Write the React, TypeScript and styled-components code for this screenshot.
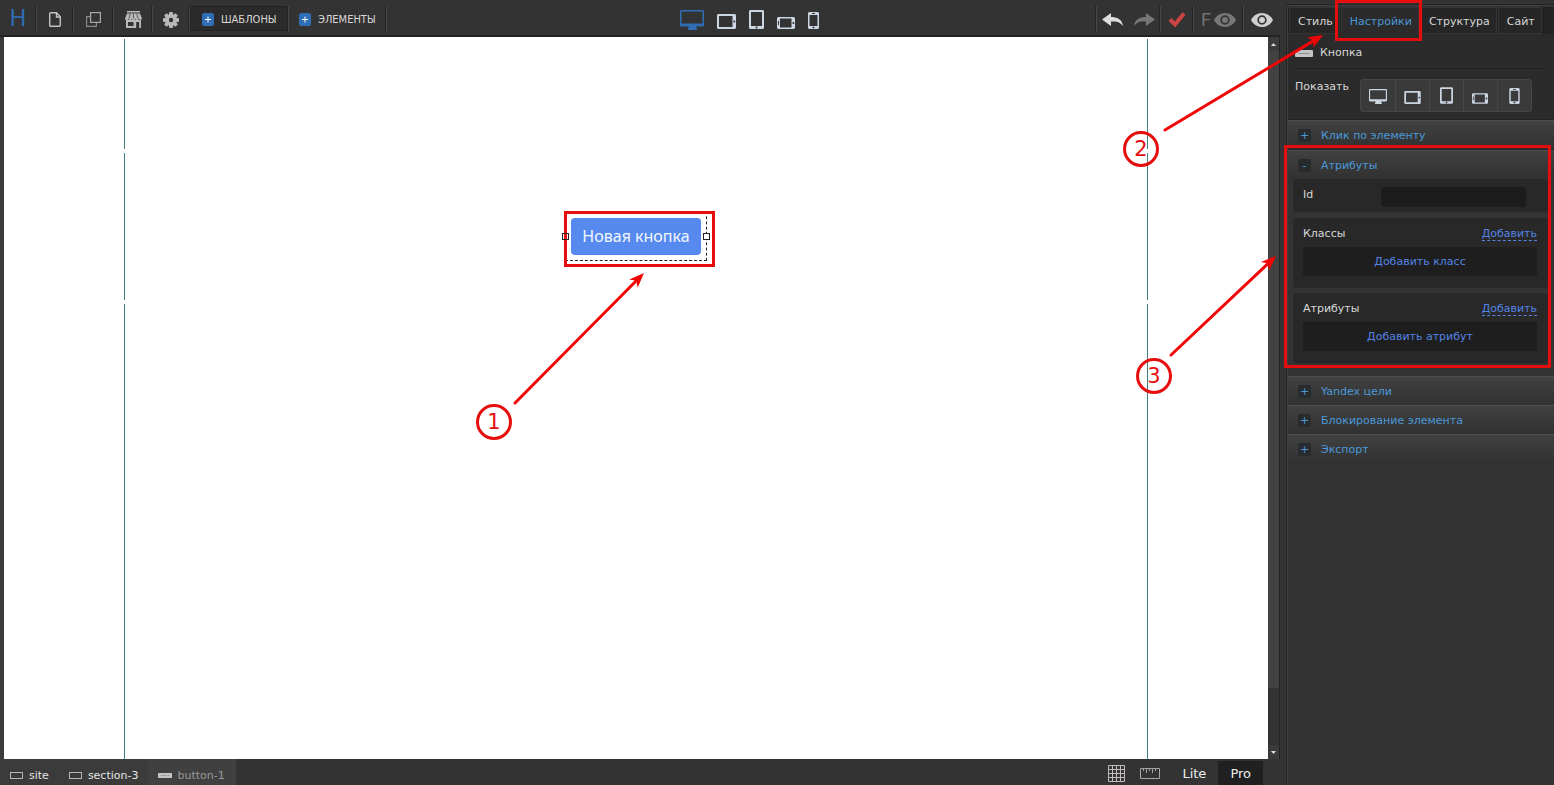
import React from "react";
import styled, { createGlobalStyle, css } from "styled-components";

const c = {
  chrome: "#333333",
  dark: "#232323",
  panel: "#2b2b2b",
  light: "#484848",
  text: "#d8d8d8",
  icon: "#c4c4c4",
  device: "#ccd6e2",
  blue: "#2f6db5",
  link: "#4a98d8",
  action: "#5384e4",
  red: "#e60d0d",
  arrow: "#f00606",
  field: "#1c1c1c",
};

const GlobalStyle = createGlobalStyle`
  * { box-sizing: border-box; }
  body { margin: 0; background: ${c.chrome}; color: ${c.text}; font: 11px/16px "DejaVu Sans", sans-serif; }
  button, input { font: inherit; color: inherit; }
  button { border: 0; padding: 0; background: none; cursor: pointer; }
  svg { display: block; flex: none; }
`;

const Page = styled.div`
  position: relative;
  display: flex;
  min-height: 100vh;
  overflow: hidden;
`;

const Workspace = styled.main`
  flex: 1;
  min-width: 0;
  display: flex;
  flex-direction: column;
  margin-right: 6px;
`;

/* Top toolbar */
const Toolbar = styled.header`
  display: flex;
  height: 37px;
  padding: 6px 0 4px;
  border-bottom: 2px solid ${c.dark};
`;

const ToolButton = styled.button<{ $w: number }>`
  display: flex;
  align-items: center;
  justify-content: center;
  width: ${(p) => p.$w}px;
  padding-top: 2px;
  border-right: 1px solid ${c.light};
  box-shadow: inset -1px 0 ${c.dark};
`;

const Logo = styled.a`
  display: flex;
  align-items: center;
  justify-content: center;
  width: 37px;
  border-right: 1px solid ${c.light};
  box-shadow: inset -1px 0 ${c.dark};
  color: ${c.blue};
  font: 23px/24px Roboto, sans-serif;
  text-decoration: none;
`;

const AddButton = styled.button<{ $active?: boolean }>`
  display: flex;
  align-items: center;
  gap: 7px;
  width: ${(p) => (p.$active ? 99 : 98)}px;
  padding: 2px 0 0 ${(p) => (p.$active ? 12 : 10)}px;
  border-right: 1px solid ${c.light};
  box-shadow: inset -1px 0 ${c.dark};
  font: 11px/16px "DejaVu Sans Condensed", "DejaVu Sans", sans-serif;
  ${(p) =>
    p.$active &&
    css`
      background: #2b2b2b;
      box-shadow: inset 0 0 0 1px ${c.dark};
    `}
`;

const Devices = styled.div`
  flex: 1;
  display: flex;
  align-items: flex-end;
  justify-content: center;
  gap: 13px;
  padding: 0 0 1px 16px;
`;

const DeviceButton = styled.button<{ $active?: boolean }>`
  padding-bottom: ${(p) => (p.$active ? 0 : 1)}px;
`;

const History = styled.div`
  display: flex;
  border-left: 1px solid ${c.light};
  box-shadow: -1px 0 ${c.dark};
`;

const HistoryButton = styled(ToolButton)<{ $plain?: boolean }>`
  gap: 3px;
  color: #737373;
  font: 18px/20px Roboto, sans-serif;
  ${(p) =>
    p.$plain &&
    css`
      border-right: 0;
      box-shadow: none;
    `}
`;

/* Canvas */
const CanvasRow = styled.div`
  flex: 1;
  display: flex;
  padding-left: 4px;
  border-right: 1px solid ${c.dark};
  background: #3d3b39;
`;

const Canvas = styled.div`
  position: relative;
  flex: 1;
  display: flex;
  flex-direction: column;
  align-items: center;
  gap: 4px;
  padding-top: 2px;
  background: #ffffff;
  overflow: hidden;
`;

const Section = styled.section<{ $h?: number }>`
  display: flex;
  justify-content: center;
  align-items: center;
  width: 1024px;
  max-width: 100%;
  border: solid #417f80;
  border-width: 0 1px;
  ${(p) => (p.$h ? `height: ${p.$h}px;` : "flex: 1;")}
`;

const Selection = styled.div`
  position: relative;
  margin-top: 19px;
  padding: 6px 5px 5px;
  border: 1px dashed #222222;
  border-top-color: transparent;
`;

const CanvasButton = styled.button`
  display: block;
  height: 37px;
  padding: 0 11px;
  border-radius: 4px;
  background: #578aee;
  color: #f3f7ff;
  font: 16px/37px "Noto Sans", sans-serif;
`;

const Handle = styled.span<{ $side: "left" | "right" }>`
  position: absolute;
  z-index: 3;
  top: 21px;
  ${(p) => p.$side}: -4px;
  width: 7px;
  height: 7px;
  border: 1px solid #222222;
  background: ${(p) => (p.$side === "right" ? "#ffffff" : "transparent")};
`;

const Scrollbar = styled.div`
  display: flex;
  flex-direction: column;
  width: 11px;
  background: ${c.chrome};
`;

const ScrollButton = styled.button`
  display: flex;
  align-items: center;
  justify-content: center;
  height: 14px;
  background: #3b3b3b;
`;

const Thumb = styled.div`
  flex: 637;
  background: #424242;
`;

const Track = styled.div`
  flex: 57;
`;

/* Bottom bar */
const StatusBar = styled.footer`
  display: flex;
  justify-content: space-between;
  height: 26px;
`;

const Crumbs = styled.nav`
  display: flex;
  padding-left: 10px;
  background: #3b3b3b;
`;

const Crumb = styled.button<{ $current?: boolean }>`
  display: flex;
  align-items: center;
  gap: 6px;
  padding: 7px 20px 0 0;
  color: #e4e4e4;
  ${(p) =>
    p.$current &&
    css`
      margin-left: -10px;
      padding: 7px 11px 0 10px;
      gap: 5px;
      background: #404040;
      color: #989898;
    `}
`;

const ViewTools = styled.div`
  display: flex;
  align-items: center;
  padding-right: 17px;
`;

const ViewButton = styled.button<{ $gap: number }>`
  padding-top: 2px;
  margin-right: ${(p) => p.$gap}px;
`;

const Mode = styled.button<{ $active?: boolean }>`
  align-self: stretch;
  margin-top: 2px;
  padding: 1px 12px 0;
  color: #eeeeee;
  font-size: 13px;
  line-height: 24px;
  background: ${(p) => (p.$active ? "#202020" : "transparent")};
`;

/* Side panel */
const Panel = styled.aside`
  position: relative;
  width: 268px;
  margin-top: 4px;
  border: solid ${c.dark};
  border-width: 1px 0 0 1px;
  box-shadow: inset 1px 1px #3e3e3e;
  padding: 2px 0 0 1px;
`;

const Tabs = styled.div`
  display: flex;
  gap: 1px;
  height: 27px;
  padding-left: 1px;
  background: ${c.dark};
`;

const Tab = styled.button<{ $active?: boolean }>`
  position: relative;
  padding: 3px 6px 0 8px;
  border: 1px solid #353535;
  border-bottom-color: ${(p) => (p.$active ? c.panel : "#353535")};
  background: ${(p) => (p.$active ? c.panel : "#262626")};
  color: ${(p) => (p.$active ? c.link : c.text)};
`;

const Summary = styled.div`
  padding: 0 7px 7px;
  background: ${c.panel};
  border-bottom: 1px solid ${c.dark};
`;

const ElementName = styled.h2`
  display: flex;
  align-items: center;
  gap: 7px;
  height: 35px;
  margin: 0;
  padding-top: 4px;
  border-bottom: 1px solid #222222;
  font-size: 11px;
  font-weight: normal;
`;

const ShowRow = styled.div`
  display: flex;
  gap: 11px;
  padding-top: 10px;
`;

const DeviceGroup = styled.div`
  display: flex;
  height: 33px;
  border: 1px solid #464646;
  border-radius: 3px;
  background: #3a3a3a;
`;

const DeviceToggle = styled.button`
  display: flex;
  align-items: flex-end;
  justify-content: center;
  width: 34px;
  padding-bottom: 7px;
  & + & {
    border-left: 1px solid #464646;
  }
`;

const Group = styled.section<{ $open?: boolean }>`
  position: relative;
  ${(p) =>
    p.$open &&
    css`
      border-top: 1px solid ${c.dark};
      padding-bottom: 8px;
    `}
`;

const GroupHeader = styled.button`
  display: flex;
  align-items: center;
  gap: 10px;
  width: 100%;
  height: 29px;
  padding: 1px 0 0 10px;
  border-top: 1px solid #4e4e4e;
  background: linear-gradient(#414141, #313131);
  color: ${c.link};
`;

const Sign = styled.span`
  width: 13px;
  height: 13px;
  border-radius: 2px;
  background: #282b2e;
  line-height: 13px;
  text-align: center;
`;

const Card = styled.div`
  margin: 0 6px 5px 5px;
  padding: 8px 11px 12px 10px;
  border-radius: 4px;
  background: #282828;
`;

const FieldCard = styled(Card)`
  display: flex;
  justify-content: space-between;
  padding: 8px 22px 5px 10px;
  margin-bottom: 6px;
`;

const IdInput = styled.input`
  width: 145px;
  height: 20px;
  border: 0;
  border-radius: 3px;
  background: ${c.field};
`;

const CardHead = styled.div`
  display: flex;
  justify-content: space-between;
  height: 21px;
`;

const AddLink = styled.a`
  height: 15px;
  border-bottom: 1px dashed ${c.action};
  color: ${c.action};
  text-decoration: none;
`;

const AddRow = styled.button`
  width: 100%;
  height: 29px;
  padding-top: 1px;
  border-radius: 3px;
  background: #1e1e1e;
  color: ${c.action};
`;

/* Step markers drawn over the editor */
const Outline = styled.span<{ $inset: string }>`
  position: absolute;
  z-index: 2;
  inset: ${(p) => p.$inset};
  border: 3px solid ${c.red};
  pointer-events: none;
`;

const Step = styled.span<{ $x: string; $y: number }>`
  position: absolute;
  z-index: 4;
  ${(p) => p.$x};
  top: ${(p) => p.$y}px;
  width: 36px;
  height: 36px;
  border: 3px solid ${c.red};
  border-radius: 50%;
  color: ${c.red};
  font-size: 21px;
  line-height: 30px;
  text-align: center;
`;

const ArrowSvg = styled.svg<{ $x: string; $y: number }>`
  position: absolute;
  z-index: 4;
  ${(p) => p.$x};
  top: ${(p) => p.$y}px;
  pointer-events: none;
`;

function Arrow({ x, y, w, h }: { x: string; y: number; w: number; h: number }) {
  const angle = (Math.atan2(-(h - 4), w - 4) * 180) / Math.PI;
  return (
    <ArrowSvg $x={x} $y={y} width={w} height={h} overflow="visible" aria-hidden="true">
      <path d={`M2 ${h - 2}L${w - 8} ${8 * (h / w)}`} stroke={c.arrow} strokeWidth="3" strokeLinecap="round" />
      <path d="M0 0L-15 -6L-11 0L-15 6Z" fill={c.arrow} transform={`translate(${w} 0) rotate(${angle})`} />
    </ArrowSvg>
  );
}

type DeviceKind = "desktop" | "tabletWide" | "tablet" | "phoneWide" | "phone";
const deviceLabels: Record<DeviceKind, string> = {
  desktop: "Компьютер",
  tabletWide: "Планшет горизонтально",
  tablet: "Планшет",
  phoneWide: "Телефон горизонтально",
  phone: "Телефон",
};
const kinds = Object.keys(deviceLabels) as DeviceKind[];

function DeviceIcon({ kind, small, color = c.device }: { kind: DeviceKind; small?: boolean; color?: string }) {
  const hole = small ? "#3a3a3a" : c.chrome;
  if (kind === "desktop")
    return (
      <svg width={small ? 18 : 24} height={small ? 15 : 20} viewBox="0 0 24 20">
        <path
          fill={color}
          fillRule="evenodd"
          d="M1.500 0h21a1.500 1.500 0 0 1 1.500 1.500v13.500a1.500 1.500 0 0 1-1.500 1.500h-6.500l1 2.500v1h-9v-1l1-2.500h-7.500a1.500 1.500 0 0 1-1.500-1.500v-13.500a1.500 1.500 0 0 1 1.500-1.500zM1.500 1.500v12h21v-12z"
        />
      </svg>
    );
  if (kind === "tabletWide")
    return (
      <svg width={small ? 17 : 19} height={small ? 13 : 15} viewBox="0 0 19 15">
        <path fill={color} fillRule="evenodd" d="M1 0h17l1 1v13l-1 1H1l-1-1V1zM2 2v11h13.500V2z" />
        <circle cx="17.300" cy="7.500" r="1" fill={hole} />
      </svg>
    );
  if (kind === "tablet")
    return (
      <svg width={small ? 13 : 15} height={small ? 17 : 19} viewBox="0 0 15 19">
        <path fill={color} fillRule="evenodd" d="M1 0h13l1 1v17l-1 1H1l-1-1V1zM2 2v14h11V2z" />
        <circle cx="7.500" cy="17.500" r="1" fill={hole} />
      </svg>
    );
  if (kind === "phoneWide")
    return (
      <svg width={small ? 16 : 18} height={small ? 11 : 12} viewBox="0 0 18 12">
        <path fill={color} fillRule="evenodd" d="M1 0h16l1 1v10l-1 1H1l-1-1V1zM3 1.500v9h11.500v-9z" />
        <path d="M1.500 4v4" stroke={hole} />
        <circle cx="16.300" cy="6" r="1" fill={hole} />
      </svg>
    );
  return (
    <svg width={11} height={small ? 16 : 17} viewBox="0 0 11 17">
      <path fill={color} fillRule="evenodd" d="M1 0h9l1 1v15l-1 1H1l-1-1V1zM1.500 3v11h8V3z" />
      <path d="M4 1.500h3" stroke={hole} />
      <circle cx="5.500" cy="15.500" r="1" fill={hole} />
    </svg>
  );
}

const PlusIcon = () => (
  <svg width="12" height="13" viewBox="0 0 12 13">
    <rect width="12" height="13" rx="2.500" fill="#2f6fb8" />
    <path d="M6 3.500v6M3 6.500h6" stroke="#fff" />
  </svg>
);

const EyeIcon = ({ color }: { color: string }) => (
  <svg width="22" height="14" viewBox="0 0 22 14">
    <path
      fill={color}
      fillRule="evenodd"
      d="M11 0C16 0 20 3 22 7 20 11 16 14 11 14S2 11 0 7C2 3 6 0 11 0zM11 2.300a4.700 4.700 0 1 0 0 9.400 4.700 4.700 0 0 0 0-9.400zM11 4a3 3 0 1 1 0 6 3 3 0 0 1 0-6z"
    />
  </svg>
);

const ReplyIcon = ({ color, flip }: { color: string; flip?: boolean }) => (
  <svg width="21" height="14" viewBox="0 0 21 14">
    <path
      fill={color}
      transform={flip ? "translate(21 0) scale(-1 1)" : undefined}
      d="M0 6.500L9 0v4c6 0 11 2 12 9-3-4-6-5-12-4.500V13z"
    />
  </svg>
);

const FrameIcon = () => (
  <svg width="13" height="7">
    <rect x="0.500" y="0.500" width="12" height="6" fill="none" stroke="#b5b5b5" />
  </svg>
);

const ButtonGlyph = ({ wide }: { wide?: boolean }) => (
  <svg width={wide ? 18 : 14} height={wide ? 7 : 5} viewBox="0 0 18 7" preserveAspectRatio="none">
    <rect width="18" height="7" rx="1" fill="#c4c4c4" />
    <path d="M4 3.500h11" stroke="#777" strokeDasharray="1.500 0.700" />
  </svg>
);

function AccordionHeader({ title, open }: { title: string; open?: boolean }) {
  return (
    <GroupHeader aria-expanded={!!open}>
      <Sign>{open ? "-" : "+"}</Sign>
      {title}
    </GroupHeader>
  );
}

function ListCard({ title, action }: { title: string; action: string }) {
  return (
    <Card>
      <CardHead>
        <span>{title}</span>
        <AddLink href="#add">Добавить</AddLink>
      </CardHead>
      <AddRow>{action}</AddRow>
    </Card>
  );
}

function TopToolbar() {
  return (
    <Toolbar>
      <Logo href="#home">H</Logo>
      <ToolButton $w={37} aria-label="Страница">
        <svg width="12" height="15" viewBox="0 0 12 15" fill="none" stroke={c.icon} strokeWidth="1.400">
          <path d="M1.700.700h5.800l3.800 4v8.600a1 1 0 0 1-1 1h-8.600a1 1 0 0 1-1-1v-11.600a1 1 0 0 1 1-1z" />
          <path d="M7.500 1v4h3.500" />
        </svg>
      </ToolButton>
      <ToolButton $w={40} aria-label="Копировать">
        <svg width="15" height="15" viewBox="0 0 15 15" fill="none" strokeWidth="1.200">
          <path d="M4 4.600H.600v9.800h9.800V11" stroke="#888" />
          <rect x="4.600" y=".600" width="9.800" height="9.800" stroke="#aaa" />
        </svg>
      </ToolButton>
      <ToolButton $w={39} aria-label="Магазин">
        <svg width="17" height="17" viewBox="0 0 17 17">
          <path fill="#b8b8b8" d="M2 0h13v1.500H2zM2 2.500h13L17 7.500a1.700 1.700 0 0 1-3.300 0 1.700 1.700 0 0 1-3.400 0 1.700 1.700 0 0 1-3.500 0 1.700 1.700 0 0 1-3.400 0A1.700 1.700 0 0 1 0 7.500z" />
          <path d="M5.200 3L4 7.500M8.500 3v4.500M11.800 3L13 7.500" stroke={c.chrome} strokeWidth=".7" />
          <path fill="#b8b8b8" fillRule="evenodd" d="M1 9h15v8h-1.800v-6h-3v6H1zM3 11v4h5.500v-4z" />
        </svg>
      </ToolButton>
      <ToolButton $w={37} aria-label="Настройки сайта">
        <svg width="16" height="16" viewBox="-8 -8 16 16" fill="#b8b8b8">
          {[0, 45, 90, 135].map((a) => (
            <path key={a} transform={`rotate(${a})`} d="M-1.700 -8h3.400l.5 3h-4.400zM-1.700 8h3.400l.5-3h-4.400z" />
          ))}
          <path fillRule="evenodd" d="M0-5.800a5.800 5.800 0 1 1 0 11.600A5.800 5.800 0 0 1 0-5.800zM0-2.200a2.200 2.200 0 1 0 0 4.400 2.200 2.200 0 0 0 0-4.400z" />
        </svg>
      </ToolButton>
      <AddButton $active>
        <PlusIcon />
        ШАБЛОНЫ
      </AddButton>
      <AddButton>
        <PlusIcon />
        ЭЛЕМЕНТЫ
      </AddButton>
      <Devices>
        {kinds.map((k) => (
          <DeviceButton key={k} $active={k === "desktop"} aria-label={deviceLabels[k]}>
            <DeviceIcon kind={k} color={k === "desktop" ? c.blue : c.device} />
          </DeviceButton>
        ))}
      </Devices>
      <History>
        <HistoryButton $w={31} $plain aria-label="Отменить">
          <ReplyIcon color="#dedede" />
        </HistoryButton>
        <HistoryButton $w={33} aria-label="Вернуть">
          <ReplyIcon color="#777777" flip />
        </HistoryButton>
        <HistoryButton $w={33} aria-label="Сохранить">
          <svg width="18" height="15" viewBox="0 0 18 15">
            <path d="M2 7.500l5 5L16 1.500" fill="none" stroke="#cc4444" strokeWidth="4" />
          </svg>
        </HistoryButton>
        <HistoryButton $w={50}>
          F<EyeIcon color="#777777" />
        </HistoryButton>
        <HistoryButton $w={36} $plain aria-label="Просмотр">
          <EyeIcon color="#d0d0d0" />
        </HistoryButton>
      </History>
    </Toolbar>
  );
}

function EditorCanvas() {
  return (
    <CanvasRow>
      <Canvas>
        <Section $h={110} />
        <Section $h={147}>
          <Selection>
            <CanvasButton>Новая кнопка</CanvasButton>
            <Handle $side="left" />
            <Handle $side="right" />
            <Outline $inset="-1px -9px -7px -2px" />
          </Selection>
        </Section>
        <Section />
        <Arrow x="left: calc(50% - 123px)" y={236} w={131} h={132} />
        <Step $x="left: calc(50% - 160px)" $y={367}>1</Step>
      </Canvas>
      <Scrollbar>
        <ScrollButton aria-label="Вверх">
          <svg width="5" height="3"><path d="M0 3L2.500 0L5 3Z" fill="#ddd" /></svg>
        </ScrollButton>
        <Thumb />
        <Track />
        <ScrollButton aria-label="Вниз">
          <svg width="5" height="3"><path d="M0 0L2.500 3L5 0Z" fill="#ddd" /></svg>
        </ScrollButton>
      </Scrollbar>
    </CanvasRow>
  );
}

function BottomBar() {
  return (
    <StatusBar>
      <Crumbs aria-label="Путь">
        <Crumb><FrameIcon />site</Crumb>
        <Crumb><FrameIcon />section-3</Crumb>
        <Crumb $current><ButtonGlyph />button-1</Crumb>
      </Crumbs>
      <ViewTools>
        <ViewButton $gap={15} aria-label="Сетка">
          <svg width="17" height="17" viewBox="0 0 17 17" fill="none" stroke="#c4bcbc">
            <path d="M.5.5h16v16H.5zM4.500 0v17M8.500 0v17M12.500 0v17M0 4.500h17M0 8.500h17M0 12.500h17" />
          </svg>
        </ViewButton>
        <ViewButton $gap={10} aria-label="Линейка">
          <svg width="20" height="11" viewBox="0 0 20 11" fill="none" stroke="#a5a5a5">
            <path d="M.5.5h19v10H.5zM3.500 1v2M6.500 1v4M9.500 1v2M12.500 1v4M15.500 1v2" />
          </svg>
        </ViewButton>
        <Mode>Lite</Mode>
        <Mode $active>Pro</Mode>
      </ViewTools>
    </StatusBar>
  );
}

function SidePanel() {
  return (
    <Panel>
      <Tabs role="tablist">
        <Tab role="tab">Стиль</Tab>
        <Tab role="tab" aria-selected $active>
          Настройки
          <Outline $inset="-8px -4px -8px -7px" />
        </Tab>
        <Tab role="tab">Структура</Tab>
        <Tab role="tab">Сайт</Tab>
      </Tabs>
      <Summary>
        <ElementName><ButtonGlyph wide />Кнопка</ElementName>
        <ShowRow>
          <span>Показать</span>
          <DeviceGroup>
            {kinds.map((k) => (
              <DeviceToggle key={k} aria-label={deviceLabels[k]}>
                <DeviceIcon kind={k} small />
              </DeviceToggle>
            ))}
          </DeviceGroup>
        </ShowRow>
      </Summary>
      <Group><AccordionHeader title="Клик по элементу" /></Group>
      <Group $open>
        <AccordionHeader title="Атрибуты" open />
        <FieldCard>
          <label htmlFor="element-id">Id</label>
          <IdInput id="element-id" />
        </FieldCard>
        <ListCard title="Классы" action="Добавить класс" />
        <ListCard title="Атрибуты" action="Добавить атрибут" />
        <Outline $inset="-5px 3px 8px -4px" />
      </Group>
      <Group><AccordionHeader title="Yandex цели" /></Group>
      <Group><AccordionHeader title="Блокирование элемента" /></Group>
      <Group><AccordionHeader title="Экспорт" /></Group>
    </Panel>
  );
}

export default function App() {
  return (
    <>
      <GlobalStyle />
      <Page>
        <Workspace>
          <TopToolbar />
          <EditorCanvas />
          <BottomBar />
        </Workspace>
        <SidePanel />
        <Step $x="right: 395px" $y={131}>2</Step>
        <Arrow x="right: 231px" y={35} w={160} h={97} />
        <Step $x="right: 382px" $y={358}>3</Step>
        <Arrow x="right: 278px" y={256} w={107} h={101} />
      </Page>
    </>
  );
}
